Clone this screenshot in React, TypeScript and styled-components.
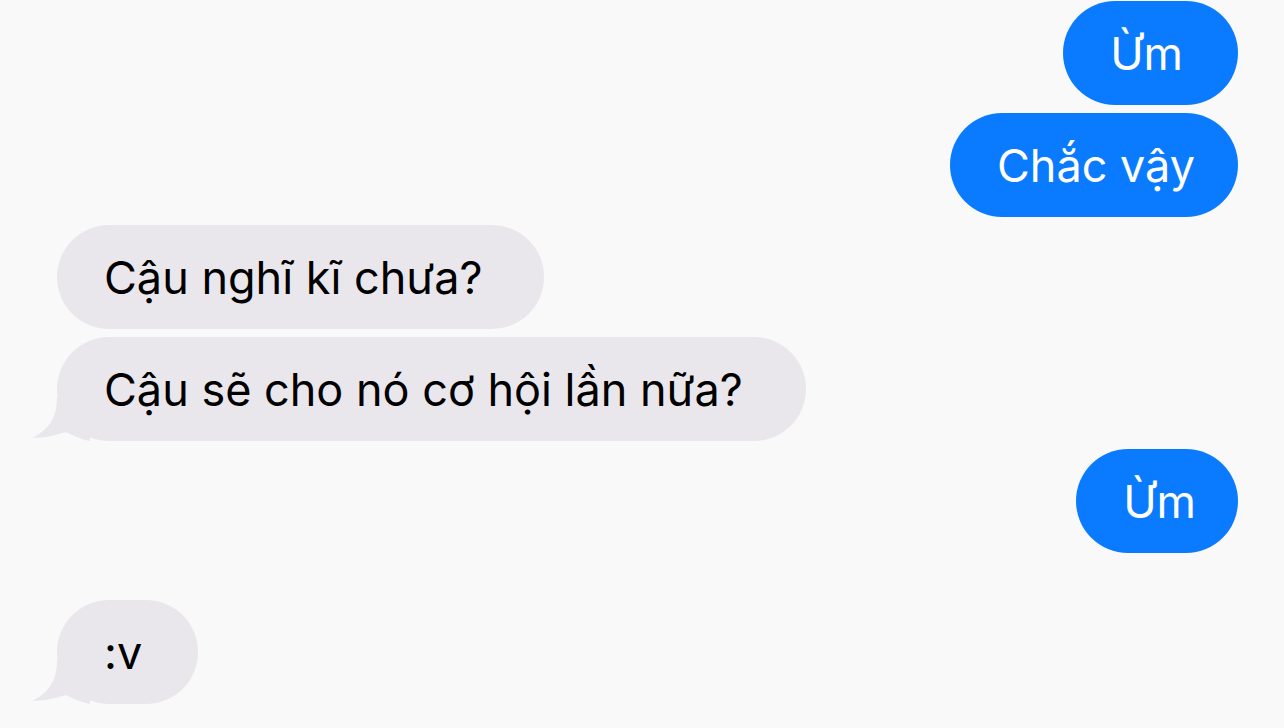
import React from "react";
import styled, { createGlobalStyle } from "styled-components";

const Global = createGlobalStyle`
  html, body { margin: 0; padding: 0; background: #f9f9f9; }
  body { font-family: Inter, "Noto Sans", sans-serif; }
`;

const Thread = styled.div`
  display: flex;
  flex-direction: column;
  gap: 8px;
  padding: 1px 46px 0 57px;
  width: 1284px;
  height: 728px;
  box-sizing: border-box;
  overflow: hidden;
`;

const Bubble = styled.div<{ $me?: boolean; $space?: number; $pr?: number }>`
  position: relative;
  align-self: ${(p) => (p.$me ? "flex-end" : "flex-start")};
  margin-top: ${(p) => p.$space ?? 0}px;
  height: 104px;
  box-sizing: border-box;
  padding: 2px ${(p) => p.$pr ?? 48}px 0 47px;
  border-radius: 52px;
  background: ${(p) => (p.$me ? "#0a7bff" : "#e9e7ec")};
  color: ${(p) => (p.$me ? "#ffffff" : "#000000")};
  font-size: 45px;
  line-height: 102px;
  letter-spacing: 0;
  white-space: nowrap;
`;

const Text = styled.span`
  position: relative;
  z-index: 1;
`;

const Tail = styled.svg`
  position: absolute;
  left: -27px;
  bottom: 0;
  width: 60px;
  height: 44px;
`;

function TailShape() {
  return (
    <Tail viewBox="0 0 60 44">
      <path
        d="M27 0 C27 22 18 33 2 41 C14 41 26 38 36 35 C42 38 50 42 60 44 L60 0 Z"
        fill="#e9e7ec"
      />
    </Tail>
  );
}

export default function App() {
  return (
    <>
      <Global />
      <Thread>
        <Bubble $me $pr={55}>
          <Text>Ừm</Text>
        </Bubble>
        <Bubble $me $pr={43}>
          <Text>Chắc vậy</Text>
        </Bubble>
        <Bubble $pr={62}>
          <Text>Cậu nghĩ kĩ chưa?</Text>
        </Bubble>
        <Bubble $pr={63}>
          <TailShape />
          <Text>Cậu sẽ cho nó cơ hội lần nữa?</Text>
        </Bubble>
        <Bubble $me $pr={42}>
          <Text>Ừm</Text>
        </Bubble>
        <Bubble $space={39} $pr={56}>
          <TailShape />
          <Text>:v</Text>
        </Bubble>
      </Thread>
    </>
  );
}
